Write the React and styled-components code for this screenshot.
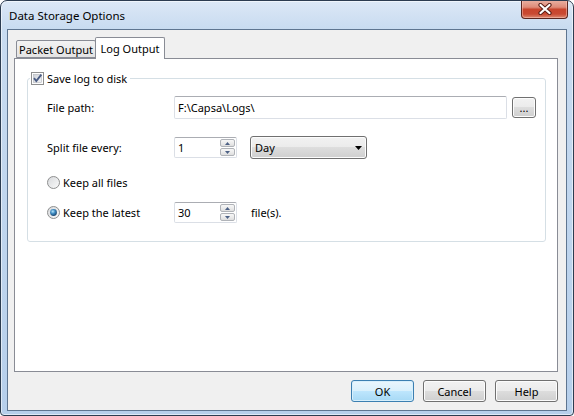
import React from "react";
import styled, { createGlobalStyle } from "styled-components";

const GlobalStyle = createGlobalStyle`
  html, body { margin: 0; padding: 0; background: #ffffff; }
  body {
    font-family: "Noto Sans", "Segoe UI", sans-serif;
    font-size: 11px;
    color: #000;
  }
  * { box-sizing: border-box; }
`;

const Window = styled.div`
  width: 574px;
  height: 416px;
  border: 1px solid #2c3c50;
  border-radius: 7px 7px 4px 4px;
  background: linear-gradient(to bottom, #dce8f6 0px, #c8dbf0 28px, #b6cfeb 100%);
  box-shadow: inset 0 0 0 1px rgba(255, 255, 255, 0.55);
  display: flex;
  flex-direction: column;
  overflow: hidden;
`;

const TitleBar = styled.div`
  height: 28px;
  display: flex;
  align-items: center;
  padding-left: 8px;
`;

const Title = styled.span`
  font-size: 11.5px;
  color: #000;
  flex: 1;
`;

const CloseButton = styled.div`
  align-self: flex-start;
  width: 47px;
  height: 19px;
  margin-right: 5px;
  margin-top: -1px;
  border: 1px solid #5a2620;
  border-top: none;
  border-radius: 0 0 4px 4px;
  background: linear-gradient(
    to bottom,
    #eab2a4 0%,
    #de8b78 40%,
    #c8452d 52%,
    #c94a33 78%,
    #dc8a72 100%
  );
  box-shadow: inset 0 0 0 1px rgba(255, 210, 200, 0.45);
  display: flex;
  align-items: center;
  justify-content: center;
`;

const Client = styled.div`
  flex: 1;
  margin: 0 6px 4px 6px;
  border: 1px solid #5e7590;
  background: #f0f0f0;
  display: flex;
  flex-direction: column;
  padding: 7px 8px 8px 6px;
`;

const TabStrip = styled.div`
  height: 22px;
  margin-bottom: -1px;
  padding-left: 2px;
  display: flex;
  align-items: flex-end;
  position: relative;
  z-index: 1;
`;

const Tab = styled.div`
  height: ${(p) => (p.$active ? "22px" : "18px")};
  width: ${(p) => p.$width}px;
  margin-bottom: ${(p) => (p.$active ? "0" : "1px")};
  margin-left: ${(p) => (p.$active ? "-1px" : "0")};
  border: 1px solid #898c95;
  border-bottom: ${(p) => (p.$active ? "none" : "1px solid #898c95")};
  border-radius: 2px 2px 0 0;
  background: ${(p) =>
    p.$active
      ? "#ffffff"
      : "linear-gradient(to bottom, #f3f3f3 0%, #ebebeb 50%, #e3e3e3 100%)"};
  display: flex;
  align-items: center;
  justify-content: center;
  padding-bottom: ${(p) => (p.$active ? "1px" : "0")};
  color: #000;
`;

const Panel = styled.div`
  flex: 1;
  background: #ffffff;
  border: 1px solid #898c95;
  padding: 13px 11px 0 12px;
`;

const GroupBox = styled.fieldset`
  margin: 0;
  min-width: 0;
  padding: 0;
  border: 1px solid #d5dfe5;
  border-radius: 3px;
`;

const GroupLegend = styled.legend`
  margin-left: 2px;
  padding: 0 3px 0 1px;
  height: 13px;
  display: flex;
  align-items: center;
  gap: 3px;
  line-height: 13px;
`;

const GroupBody = styled.div`
  padding: 11px 9px 17px 19px;
`;

const FieldRow = styled.div`
  display: flex;
  align-items: center;
  height: ${(p) => p.$height}px;
  margin-top: ${(p) => p.$top || 0}px;
`;

const FieldLabel = styled.div`
  width: 127px;
  flex: none;
  display: flex;
  align-items: center;
  gap: 3px;
`;

const TextBox = styled.div`
  flex: 1;
  height: 23px;
  border: 1px solid #dbdfe6;
  border-top-color: #abadb3;
  border-radius: 2px;
  background: #fff;
  padding-left: 3px;
  display: flex;
  align-items: center;
`;

const PushButton = styled.div`
  width: ${(p) => p.$width}px;
  height: ${(p) => p.$height}px;
  flex: none;
  margin-left: ${(p) => p.$gap || 0}px;
  border: 1px solid ${(p) => (p.$default ? "#3c7fb1" : "#707070")};
  border-radius: 3px;
  background: ${(p) =>
    p.$default
      ? "linear-gradient(to bottom, #eaf6fd 0%, #d9f0fc 50%, #bee6fd 50%, #a7d9f5 100%)"
      : "linear-gradient(to bottom, #f2f2f2 0%, #ebebeb 50%, #dddddd 50%, #cfcfcf 100%)"};
  box-shadow: inset 0 0 0 1px ${(p) => (p.$default ? "#d7effc" : "#fcfcfc")};
  display: flex;
  align-items: center;
  justify-content: center;
  color: #000;
`;

const Spin = styled.div`
  width: 63px;
  height: 21px;
  flex: none;
  border: 1px solid #dbdfe6;
  border-top-color: #abadb3;
  border-radius: 2px;
  background: #fff;
  display: flex;
  align-items: center;
  padding-left: 3px;
`;

const SpinValue = styled.span`
  flex: 1;
`;

const SpinArrows = styled.div`
  width: 16px;
  height: 100%;
  display: flex;
  flex-direction: column;
  gap: 1px;
  padding: 1px 1px 1px 0;
`;

const SpinArrow = styled.div`
  flex: 1;
  border: 1px solid #b0b3b8;
  border-radius: 2px;
  background: linear-gradient(to bottom, #f7f7f7 0%, #ececec 50%, #dedede 100%);
  display: flex;
  align-items: center;
  justify-content: center;
`;

const ComboBox = styled.div`
  width: 117px;
  height: 23px;
  margin-left: 13px;
  border: 1px solid #707070;
  border-radius: 3px;
  background: linear-gradient(to bottom, #f2f2f2 0%, #ebebeb 50%, #dddddd 50%, #cfcfcf 100%);
  box-shadow: inset 0 0 0 1px #fcfcfc;
  display: flex;
  align-items: center;
  padding: 0 4px 0 4px;
`;

const ComboText = styled.span`
  flex: 1;
`;

const Suffix = styled.span`
  margin-left: 14px;
`;

const ButtonRow = styled.div`
  margin-top: 8px;
  display: flex;
  justify-content: flex-end;
  gap: 9px;
`;

const CloseGlyph = () => (
  <svg width="14" height="12" viewBox="0 0 14 12">
    <path d="M2.5 2 L11.5 10 M11.5 2 L2.5 10" stroke="#5b1f16" strokeWidth="4.2" strokeLinecap="round" />
    <path d="M2.5 2 L11.5 10 M11.5 2 L2.5 10" stroke="#ffffff" strokeWidth="2.2" strokeLinecap="round" />
  </svg>
);

const CheckBoxIcon = () => (
  <svg width="13" height="13" viewBox="0 0 13 13">
    <defs>
      <linearGradient id="cbFill" x1="0" y1="0" x2="1" y2="1">
        <stop offset="0" stopColor="#cdd1d8" />
        <stop offset="1" stopColor="#f4f5f7" />
      </linearGradient>
    </defs>
    <rect x="0.5" y="0.5" width="12" height="12" fill="#fdfdfd" stroke="#8e8f8f" />
    <rect x="2.5" y="2.5" width="8" height="8" fill="url(#cbFill)" stroke="#b2b5ba" strokeWidth="0.6" />
    <path d="M3 6.2 L5.3 9 L10.3 2.6" fill="none" stroke="#4a5c84" strokeWidth="1.9" />
  </svg>
);

const RadioIcon = ({ checked }) => (
  <svg width="13" height="13" viewBox="0 0 13 13">
    <defs>
      <linearGradient id="rbFill" x1="0" y1="0" x2="1" y2="1">
        <stop offset="0" stopColor="#d6d8db" />
        <stop offset="1" stopColor="#fbfbfb" />
      </linearGradient>
      <radialGradient id="rbDot" cx="0.4" cy="0.35" r="0.7">
        <stop offset="0" stopColor="#b9e6fb" />
        <stop offset="0.45" stopColor="#3f8dc4" />
        <stop offset="1" stopColor="#173e66" />
      </radialGradient>
    </defs>
    <circle cx="6.5" cy="6.5" r="6" fill="url(#rbFill)" stroke="#8e8f8f" />
    {checked && <circle cx="6.5" cy="6.5" r="3.4" fill="url(#rbDot)" />}
  </svg>
);

const Triangle = ({ up, color = "#4d6185", w = 5, h = 3 }) => (
  <svg width={w} height={h} viewBox={`0 0 ${w} ${h}`}>
    <path d={up ? `M0 ${h} L${w / 2} 0 L${w} ${h} Z` : `M0 0 L${w} 0 L${w / 2} ${h} Z`} fill={color} />
  </svg>
);

const Spinner = ({ value }) => (
  <Spin>
    <SpinValue>{value}</SpinValue>
    <SpinArrows>
      <SpinArrow><Triangle up /></SpinArrow>
      <SpinArrow><Triangle /></SpinArrow>
    </SpinArrows>
  </Spin>
);

export default function App() {
  return (
    <>
      <GlobalStyle />
      <Window>
        <TitleBar>
          <Title>Data Storage Options</Title>
          <CloseButton><CloseGlyph /></CloseButton>
        </TitleBar>
        <Client>
          <TabStrip>
            <Tab $width={80}>Packet Output</Tab>
            <Tab $width={70} $active>Log Output</Tab>
          </TabStrip>
          <Panel>
            <GroupBox>
              <GroupLegend>
                <CheckBoxIcon />
                <span>Save log to disk</span>
              </GroupLegend>
              <GroupBody>
                <FieldRow $height={23}>
                  <FieldLabel>File path:</FieldLabel>
                  <TextBox>F:\Capsa\Logs\</TextBox>
                  <PushButton $width={24} $height={21} $gap={5}>...</PushButton>
                </FieldRow>
                <FieldRow $height={23} $top={17}>
                  <FieldLabel>Split file every:</FieldLabel>
                  <Spinner value="1" />
                  <ComboBox>
                    <ComboText>Day</ComboText>
                    <Triangle color="#000" w={7} h={4} />
                  </ComboBox>
                </FieldRow>
                <FieldRow $height={15} $top={16}>
                  <FieldLabel>
                    <RadioIcon />
                    <span>Keep all files</span>
                  </FieldLabel>
                </FieldRow>
                <FieldRow $height={23} $top={11}>
                  <FieldLabel>
                    <RadioIcon checked />
                    <span>Keep the latest</span>
                  </FieldLabel>
                  <Spinner value="30" />
                  <Suffix>file(s).</Suffix>
                </FieldRow>
              </GroupBody>
            </GroupBox>
          </Panel>
          <ButtonRow>
            <PushButton $width={63} $height={22} $default>OK</PushButton>
            <PushButton $width={63} $height={22}>Cancel</PushButton>
            <PushButton $width={63} $height={22}>Help</PushButton>
          </ButtonRow>
        </Client>
      </Window>
    </>
  );
}
